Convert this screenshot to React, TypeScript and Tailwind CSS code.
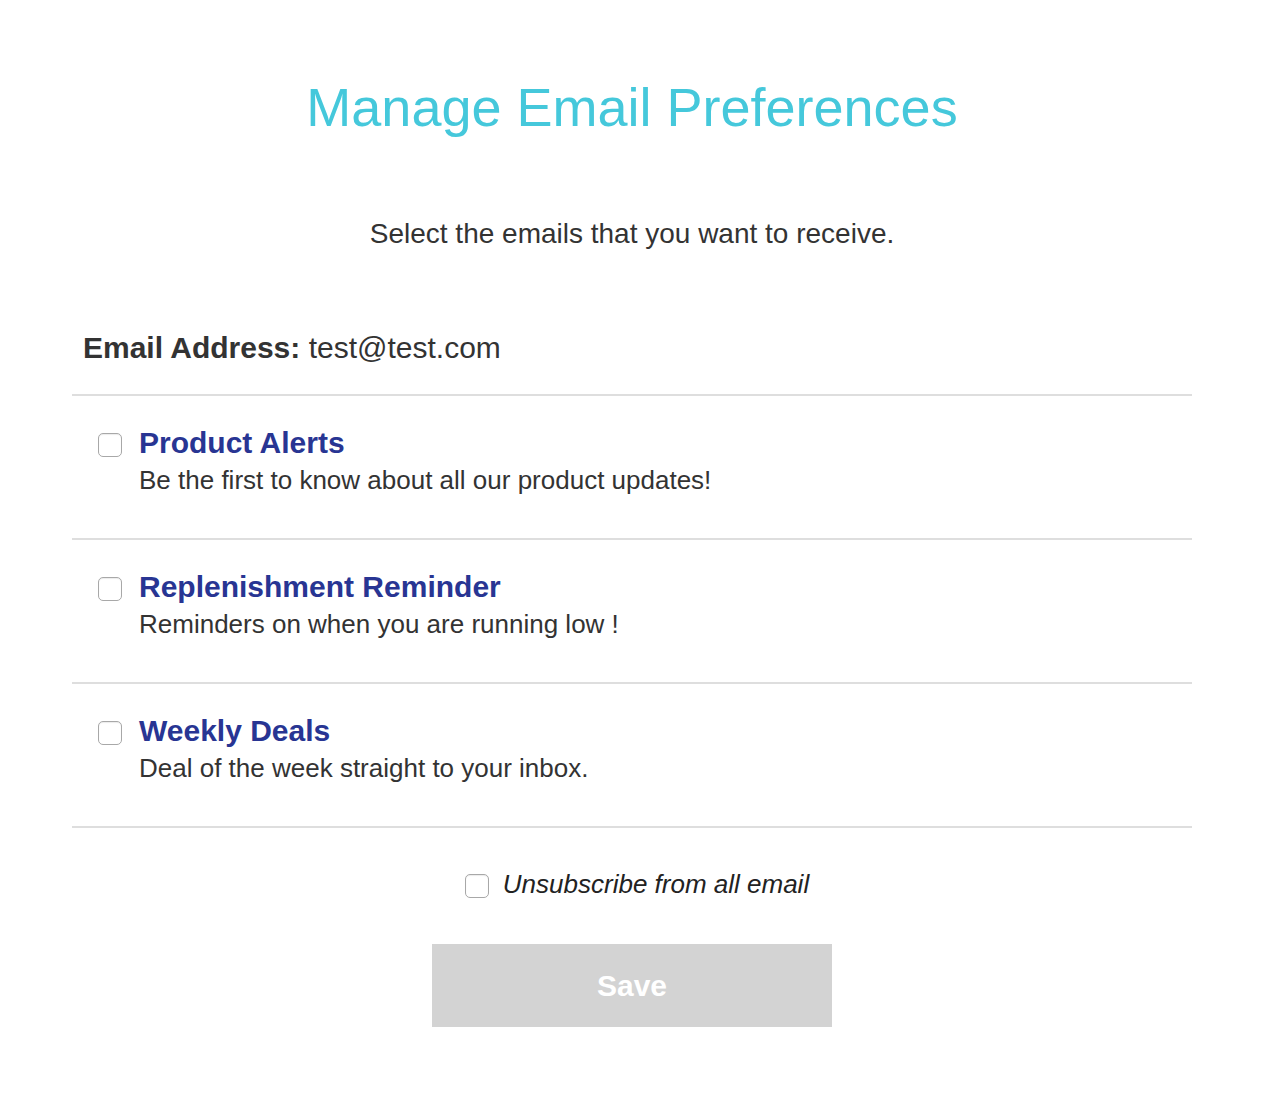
import React, { useState } from 'react';

const topics = [
  { id: 'alerts', title: 'Product Alerts', text: 'Be the first to know about all our product updates!' },
  { id: 'replenish', title: 'Replenishment Reminder', text: 'Reminders on when you are running low !' },
  { id: 'deals', title: 'Weekly Deals', text: 'Deal of the week straight to your inbox.' },
];

const Box: React.FC<{ checked: boolean; onChange: () => void }> = ({ checked, onChange }) => (
  <input
    type="checkbox"
    checked={checked}
    onChange={onChange}
    className="appearance-none block w-[24px] h-[24px] shrink-0 rounded-[5px] border border-[#a8a8a8] bg-white shadow-[inset_0_1px_1px_rgba(0,0,0,0.08)] checked:bg-[#283593] checked:border-[#283593] cursor-pointer"
  />
);

const App: React.FC = () => {
  const [picked, setPicked] = useState<Record<string, boolean>>({});
  const [unsub, setUnsub] = useState(false);

  return (
    <div className="min-h-screen w-full bg-white pl-[2px] font-['Liberation_Sans',Arial,sans-serif] text-[#333]">
      <div className="w-[1120px] mx-auto pt-[80px] pb-[74px]">
        <h1 className="text-center text-[54px] leading-none text-[#45c8db]">Manage Email Preferences</h1>

        <p className="text-center text-[28px] leading-none mt-[86px]">Select the emails that you want to receive.</p>

        {/* Email row */}
        <div className="px-[11px] mt-[85px] pb-[31px] border-b-2 border-[#dedede] text-[30px] leading-none">
          <span className="font-bold">Email Address:</span> test@test.com
        </div>

        {/* Topics */}
        {topics.map((t) => (
          <div key={t.id} className="flex gap-[17px] pl-[26px] pt-[32px] h-[144px] border-b-2 border-[#dedede]">
            <div className="pt-[5px]">
              <Box checked={!!picked[t.id]} onChange={() => setPicked({ ...picked, [t.id]: !picked[t.id] })} />
            </div>
            <div className="flex flex-col">
              <span className="text-[30px] leading-none font-bold text-[#283593]">{t.title}</span>
              <span className="text-[26px] leading-none mt-[9px]">{t.text}</span>
            </div>
          </div>
        ))}

        {/* Unsubscribe */}
        <div className="flex items-start justify-center gap-[14px] mt-[43px] pl-[10px]">
          <div className="pt-[3px]">
            <Box checked={unsub} onChange={() => setUnsub(!unsub)} />
          </div>
          <span className="italic text-[26px] leading-none text-[#222]">Unsubscribe from all email</span>
        </div>

        <div className="flex justify-center mt-[46px]">
          <button className="w-[400px] h-[83px] bg-[#d3d3d3] text-white text-[30px] font-bold">Save</button>
        </div>
      </div>
    </div>
  );
};

export default App;
